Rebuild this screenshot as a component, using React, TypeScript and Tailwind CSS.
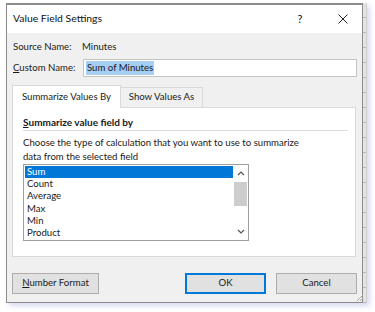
import React from "react";

const font = { fontFamily: 'Lato, "Noto Sans", sans-serif' };

function Btn({ children, primary, w }: { children: React.ReactNode; primary?: boolean; w: string }) {
  return (
    <div
      className={`${w} h-[21px] flex items-center justify-center bg-[#e1e1e1] text-[9.6px] text-[#1a1a1a] whitespace-nowrap ${
        primary ? "border-2 border-[#0078d7]" : "border border-[#adadad]"
      }`}
    >
      {children}
    </div>
  );
}

export default function App() {
  const items = ["Sum", "Count", "Average", "Max", "Min", "Product"];
  return (
    <div className="w-[375px] h-[312px] bg-white pt-[3px] pl-[6px] overflow-hidden" style={font}>
      <div className="flex w-[361px] h-[300px] shadow-[3px_3px_5px_rgba(130,130,220,0.3)]">
        <div className="relative w-[357px] h-[300px] border border-[#8c8c8c] border-t-2 flex flex-col bg-[#f0f0f0]">
          {/* title bar */}
          <div className="h-[28px] bg-white flex items-center pl-[6px] text-[10.4px] text-[#111] whitespace-nowrap">
            <span className="flex-1">Value Field Settings</span>
            <span className="w-[10px] text-center mr-[33px] text-[11px]">?</span>
            <svg width="10" height="10" viewBox="0 0 10 10" className="mr-[14px]">
              <path d="M0.5 0.5 L9.5 9.5 M9.5 0.5 L0.5 9.5" stroke="#222" strokeWidth="1" />
            </svg>
          </div>
          {/* body */}
          <div className="flex-1 flex flex-col px-[5px] text-[9.6px] text-[#1a1a1a] whitespace-nowrap">
            <div className="h-[14px] mt-[7px] flex items-center pl-[1px]">
              <span className="w-[69px]">Source Name:</span>
              <span>Minutes</span>
            </div>
            <div className="mt-[5px] h-[18px] flex items-center pl-[1px]">
              <span className="w-[70px]">
                <span className="underline">C</span>ustom Name:
              </span>
              <div className="flex-1 h-[18px] bg-white border border-[#c4c4c4] flex items-center pl-[2px]">
                <span className="bg-[#a6cdf2] px-[1px] leading-[14px]">Sum of Minutes</span>
              </div>
            </div>
            {/* tabs */}
            <div className="mt-[7px] flex items-end h-[23px]">
              <div className="w-[109px] h-[23px] bg-white border border-b-0 border-[#d9d9d9] flex items-center justify-center relative z-10 -mb-px">
                Summarize Values By
              </div>
              <div className="w-[82px] h-[20px] bg-[#f0f0f0] border border-l-0 border-b-0 border-[#d9d9d9] flex items-center justify-center">
                Show Values As
              </div>
            </div>
            <div className="w-[344px] h-[150px] bg-white border border-[#d9d9d9] flex flex-col px-[10px]">
              <div className="mt-[7px] font-bold text-[10px] h-[14px] flex items-center">
                <span className="underline">S</span>ummarize value field by
              </div>
              <div className="mt-[1px] h-px bg-[#dcdcdc] mr-[-3px]" />
              <div className="mt-[5px] leading-[13.5px]">
                Choose the type of calculation that you want to use to summarize
                <br />
                data from the selected field
              </div>
              <div className="mt-[1px] w-[226px] h-[77px] border border-[#a0a0a0] flex">
                <div className="flex-1 flex flex-col pt-px pl-px">
                  {items.map((it, i) => (
                    <div
                      key={it}
                      className={`h-[12.2px] leading-[12px] pl-[2px] ${
                        i === 0 ? "bg-[#0078d7] text-white" : ""
                      }`}
                    >
                      {it}
                    </div>
                  ))}
                </div>
                <div className="w-[15px] flex flex-col items-center">
                  <svg width="8" height="14" viewBox="0 0 8 14" className="mt-[1px]">
                    <path d="M1 9 L4 6 L7 9" stroke="#555" strokeWidth="1.2" fill="none" />
                  </svg>
                  <div className="w-[13px] h-[24px] bg-[#cdcdcd] mt-[2px]" />
                  <div className="flex-1" />
                  <svg width="8" height="14" viewBox="0 0 8 14" className="mb-[1px]">
                    <path d="M1 5 L4 8 L7 5" stroke="#555" strokeWidth="1.2" fill="none" />
                  </svg>
                </div>
              </div>
            </div>
            {/* buttons */}
            <div className="mt-[16px] flex">
              <Btn w="w-[87px]">
                <span>
                  <span className="underline">N</span>umber Format
                </span>
              </Btn>
              <div className="flex-1" />
              <Btn w="w-[81px]" primary>
                OK
              </Btn>
              <div className="w-[10px]" />
              <Btn w="w-[81px]">Cancel</Btn>
            </div>
          </div>
          <svg width="8" height="8" viewBox="0 0 8 8" className="absolute right-[-2px] bottom-[0px]">
            <path d="M7 1 L1 7 M7 4 L4 7 M7 6.5 L6.5 7" stroke="#aaa" strokeWidth="1" />
          </svg>
        </div>
        <div className="w-[4px] h-[300px] bg-[#e4e4e4] bg-[repeating-linear-gradient(to_bottom,transparent_0px,transparent_14px,#b8b8b8_14px,#b8b8b8_15px)] border-r border-[#d0d0d0]" />
      </div>
    </div>
  );
}
